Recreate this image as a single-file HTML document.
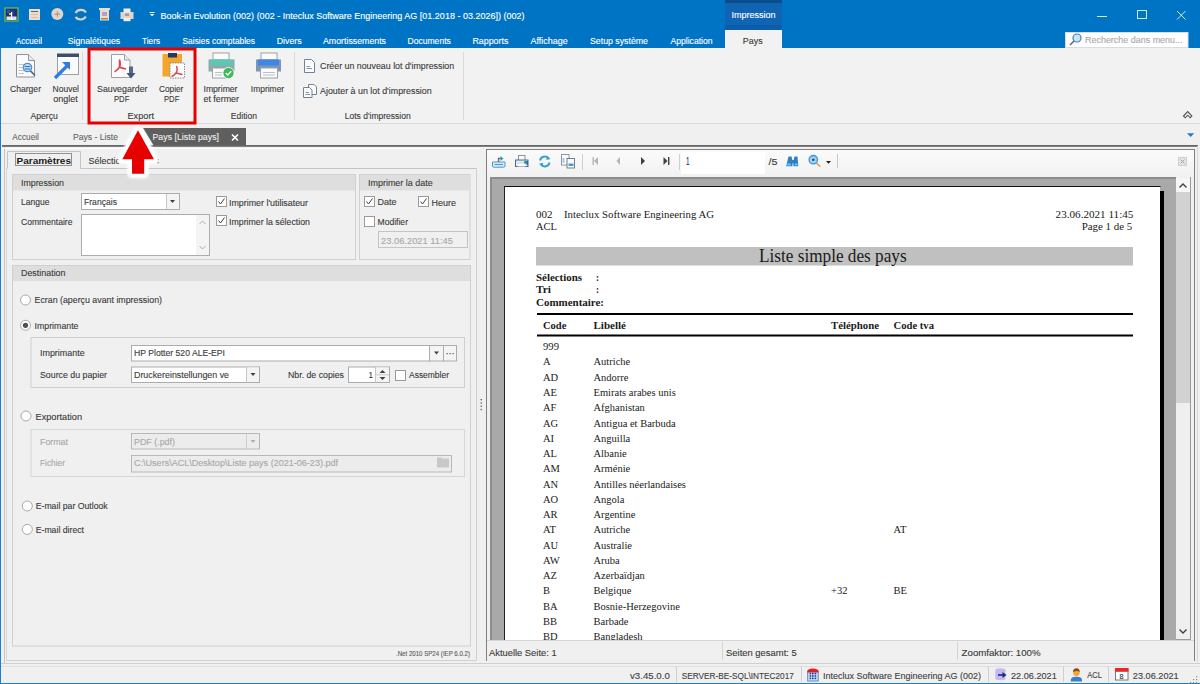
<!DOCTYPE html>
<html><head><meta charset="utf-8"><title>Book-in Evolution</title>
<style>
html,body{margin:0;padding:0;width:1200px;height:684px;overflow:hidden;background:#f0f0f0}
svg{display:block}
text{white-space:pre}
</style></head><body>
<svg width="1200" height="684" viewBox="0 0 1200 684">
<rect x="0" y="0" width="1200" height="684" fill="#f0f0f0"/>
<rect x="0" y="0" width="1200" height="48" fill="#0074c4" />
<rect x="5" y="8" width="13" height="13" fill="#1f2f7a" stroke="#6cc83c" stroke-width="1.2" />
<rect x="7" y="10" width="3" height="3" fill="#3050c0" />
<rect x="11" y="10" width="3" height="4" fill="#2040a0" />
<rect x="9" y="13" width="3" height="2" fill="#c0d040" />
<rect x="6.5" y="16.5" width="10" height="3.5" fill="#e0e4f0" />
<rect x="11" y="12" width="1.2" height="8" fill="#ffffff" />
<rect x="29" y="9" width="11" height="11" fill="#ecdccc" />
<line x1="31" y1="11.5" x2="38" y2="11.5" stroke="#606060" stroke-width="1" />
<line x1="31" y1="14.5" x2="38" y2="14.5" stroke="#d0c0b0" stroke-width="1" />
<line x1="31" y1="17.5" x2="38" y2="17.5" stroke="#d0c0b0" stroke-width="1" />
<circle cx="57.3" cy="14.1" r="6" fill="#e2d4c6"/>
<line x1="54.5" y1="14.1" x2="60" y2="14.1" stroke="#a09080" stroke-width="1" />
<line x1="57.3" y1="11.5" x2="57.3" y2="16.7" stroke="#a09080" stroke-width="1" />
<path d="M75.5 13 A6 5.6 0 0 1 86 12.5 M85.8 16.5 A6 5.6 0 0 1 75.5 17" stroke="#e2cebe" stroke-width="2.2" fill="none"/>
<rect x="99" y="8" width="11" height="2" fill="#ecdccc" />
<rect x="100" y="10" width="9" height="10.5" fill="#ecdccc" />
<rect x="102" y="12" width="5" height="4" fill="#b0a4c0" />
<rect x="101" y="18" width="7" height="1.5" fill="#c87850" />
<rect x="120.5" y="12" width="13" height="7" fill="#e2d4c6" />
<rect x="123.5" y="8.5" width="7" height="4" fill="#f4ece4" />
<rect x="123.5" y="18" width="7" height="3.2" fill="#f4ece4" />
<rect x="125" y="13.5" width="4" height="2.5" fill="#9a9ab0" />
<rect x="149.7" y="12" width="4.8" height="0.9" fill="#ffffff" />
<path d="M149.7 14 L154.5 14 L152.1 16.3 Z" fill="#ffffff" />
<text x="160.5" y="19.2" font-family="Liberation Sans" font-size="9.2" fill="#ffffff" textLength="364" lengthAdjust="spacingAndGlyphs" stroke="#ffffff" stroke-width="0.12" >Book-in Evolution (002) (002 - Inteclux Software Engineering AG [01.2018 - 03.2026]) (002)</text>
<rect x="725" y="0" width="57" height="30" fill="#1064b4" />
<rect x="725" y="0" width="57" height="3" fill="#0a4c8c" />
<rect x="725" y="25" width="57" height="5" fill="#0c5cac" />
<text x="731.5" y="18" font-family="Liberation Sans" font-size="9.2" fill="#ffffff" textLength="44" lengthAdjust="spacingAndGlyphs" stroke="#ffffff" stroke-width="0.12" >Impression</text>
<line x1="1097" y1="16.5" x2="1107" y2="16.5" stroke="#d6e6f4" stroke-width="1" />
<rect x="1137.5" y="10.5" width="9" height="8" fill="none" stroke="#d6e6f4" stroke-width="1" />
<path d="M1177 11 L1185.5 19.5 M1185.5 11 L1177 19.5" fill="none" stroke="#d6e6f4" stroke-width="1" />
<text x="15.8" y="43.7" font-family="Liberation Sans" font-size="9.2" fill="#ffffff" textLength="26.2" lengthAdjust="spacingAndGlyphs" stroke="#ffffff" stroke-width="0.12" >Accueil</text>
<text x="67.7" y="43.7" font-family="Liberation Sans" font-size="9.2" fill="#ffffff" textLength="52.5" lengthAdjust="spacingAndGlyphs" stroke="#ffffff" stroke-width="0.12" >Signalétiques</text>
<text x="142" y="43.7" font-family="Liberation Sans" font-size="9.2" fill="#ffffff" textLength="18" lengthAdjust="spacingAndGlyphs" stroke="#ffffff" stroke-width="0.12" >Tiers</text>
<text x="182.5" y="43.7" font-family="Liberation Sans" font-size="9.2" fill="#ffffff" textLength="72.5" lengthAdjust="spacingAndGlyphs" stroke="#ffffff" stroke-width="0.12" >Saisies comptables</text>
<text x="276.7" y="43.7" font-family="Liberation Sans" font-size="9.2" fill="#ffffff" textLength="25" lengthAdjust="spacingAndGlyphs" stroke="#ffffff" stroke-width="0.12" >Divers</text>
<text x="323" y="43.7" font-family="Liberation Sans" font-size="9.2" fill="#ffffff" textLength="63" lengthAdjust="spacingAndGlyphs" stroke="#ffffff" stroke-width="0.12" >Amortissements</text>
<text x="407.5" y="43.7" font-family="Liberation Sans" font-size="9.2" fill="#ffffff" textLength="43.3" lengthAdjust="spacingAndGlyphs" stroke="#ffffff" stroke-width="0.12" >Documents</text>
<text x="472.5" y="43.7" font-family="Liberation Sans" font-size="9.2" fill="#ffffff" textLength="35.8" lengthAdjust="spacingAndGlyphs" stroke="#ffffff" stroke-width="0.12" >Rapports</text>
<text x="530.5" y="43.7" font-family="Liberation Sans" font-size="9.2" fill="#ffffff" textLength="37.3" lengthAdjust="spacingAndGlyphs" stroke="#ffffff" stroke-width="0.12" >Affichage</text>
<text x="590" y="43.7" font-family="Liberation Sans" font-size="9.2" fill="#ffffff" textLength="58" lengthAdjust="spacingAndGlyphs" stroke="#ffffff" stroke-width="0.12" >Setup système</text>
<text x="670.5" y="43.7" font-family="Liberation Sans" font-size="9.2" fill="#ffffff" textLength="42" lengthAdjust="spacingAndGlyphs" stroke="#ffffff" stroke-width="0.12" >Application</text>
<rect x="725" y="30" width="57" height="18" fill="#f2f2f2" />
<text x="742.8" y="43.7" font-family="Liberation Sans" font-size="9.2" fill="#3a3a3a" textLength="19.8" lengthAdjust="spacingAndGlyphs" stroke="#3a3a3a" stroke-width="0.12" >Pays</text>
<rect x="1065.5" y="32.5" width="122.5" height="15" fill="#ffffff" stroke="#d8dde2" stroke-width="1" />
<circle cx="1077" cy="38" r="4" fill="#c8e6f8" stroke="#4a7fae" stroke-width="1.2"/>
<line x1="1074" y1="41" x2="1070" y2="45" stroke="#4a6f8e" stroke-width="1.6" />
<text x="1085" y="43" font-family="Liberation Sans" font-size="9.2" fill="#a8a8a8" textLength="97.5" lengthAdjust="spacingAndGlyphs" stroke="#a8a8a8" stroke-width="0.12" >Recherche dans menu...</text>
<rect x="0" y="48" width="1200" height="76" fill="#f2f2f2" />
<line x1="0" y1="123.5" x2="1200" y2="123.5" stroke="#d9d9d9" stroke-width="1" />
<line x1="82.5" y1="52" x2="82.5" y2="120" stroke="#dadada" stroke-width="1" />
<line x1="294.5" y1="52" x2="294.5" y2="120" stroke="#dadada" stroke-width="1" />
<line x1="463.5" y1="52" x2="463.5" y2="120" stroke="#dadada" stroke-width="1" />
<path d="M16.5 54.5 L28.5 54.5 L34.5 60.5 L34.5 77 L16.5 77 Z" fill="#fbfbfb" stroke="#8c949c" stroke-width="1" />
<path d="M28.5 54.5 L28.5 60.5 L34.5 60.5" fill="#e8e8e8" stroke="#8c949c" stroke-width="1" />
<line x1="18.5" y1="64.5" x2="24" y2="64.5" stroke="#c0c6cc" stroke-width="1" />
<line x1="18.5" y1="67.5" x2="24" y2="67.5" stroke="#c0c6cc" stroke-width="1" />
<line x1="18.5" y1="70.5" x2="24" y2="70.5" stroke="#c0c6cc" stroke-width="1" />
<line x1="18.5" y1="73.5" x2="24" y2="73.5" stroke="#c0c6cc" stroke-width="1" />
<circle cx="27.5" cy="67.5" r="4.2" fill="#bfe3f6" stroke="#5a8fb8" stroke-width="1.2"/>
<line x1="24.5" y1="66.5" x2="30.5" y2="66.5" stroke="#2d7fd0" stroke-width="1.2" />
<line x1="24.5" y1="69" x2="30.5" y2="69" stroke="#2d7fd0" stroke-width="1.2" />
<line x1="30.5" y1="70.8" x2="35" y2="75.5" stroke="#5a6b7c" stroke-width="1.8" />
<rect x="57.5" y="54.5" width="21" height="20" fill="#fbfbfb" stroke="#9aa2aa" stroke-width="1" />
<rect x="57" y="53.5" width="22" height="3.5" fill="#3b4f6a" />
<path d="M55 78 L67 66" fill="none" stroke="#2f7de0" stroke-width="3.2" />
<path d="M62 62 L70 62 L70 70 Z" fill="#2f7de0" />
<path d="M111.5 54.5 L124.5 54.5 L130 60 L130 77.5 L111.5 77.5 Z" fill="#fbfbfb" stroke="#9aa0a8" stroke-width="1" />
<path d="M124.5 54.5 L124.5 60 L130 60" fill="#ececec" stroke="#9aa0a8" stroke-width="1" />
<path d="M119.5 59.5 C120.5 63 121 65 119.5 67 C118 69.5 116 71 114.5 72 M119.5 67 C121.5 68 124 68.5 126 69 M119.5 67 L119.5 59.5" fill="none" stroke="#d8434e" stroke-width="1.5" />
<rect x="129" y="66.5" width="4" height="7" fill="#4f6a8c" />
<path d="M126.5 73 L135.5 73 L131 78.5 Z" fill="#3f5878" />
<rect x="162.5" y="54" width="19.5" height="22.5" fill="#f4a62a" />
<rect x="168" y="53" width="9" height="4.5" fill="#203a66" />
<rect x="170" y="63" width="14.5" height="15" fill="#fdfdfd" stroke="#8a9098" stroke-width="1" stroke-dasharray="1.5 1"/>
<path d="M176.5 66 C177.5 69 177.5 71 176 73 C174.5 75 173 76 171.5 76.5 M176 73 C178 73.5 180.5 74 182.5 74.5" fill="none" stroke="#d8434e" stroke-width="1.4" />
<rect x="213" y="53" width="16" height="7" fill="#fbfbfb" stroke="#9aa2a8" stroke-width="1" />
<rect x="208.5" y="59.5" width="26" height="12" fill="#8faaa6" />
<rect x="210" y="59.5" width="23" height="6" fill="#5fc6b4" />
<rect x="212.5" y="68" width="17" height="10" fill="#fbfbfb" stroke="#9aa2a8" stroke-width="1" />
<line x1="215" y1="72.5" x2="226" y2="72.5" stroke="#b8c0c0" stroke-width="1" />
<line x1="215" y1="75" x2="222" y2="75" stroke="#b8c0c0" stroke-width="1" />
<circle cx="228.5" cy="73" r="5.6" fill="#3dba5d" stroke="#ffffff" stroke-width="0.8"/>
<path d="M225.8 73 L227.8 75 L231.2 71.2" fill="none" stroke="#ffffff" stroke-width="1.4" />
<rect x="261" y="53" width="16" height="7" fill="#fbfbfb" stroke="#9aa2a8" stroke-width="1" />
<rect x="256" y="59.5" width="25" height="12" fill="#7d96b8" />
<rect x="258" y="59.5" width="21" height="6" fill="#3f86e6" />
<rect x="260.5" y="68" width="17" height="10" fill="#fbfbfb" stroke="#9aa2a8" stroke-width="1" />
<line x1="263" y1="72.5" x2="275" y2="72.5" stroke="#b8c0c8" stroke-width="1" />
<line x1="263" y1="75" x2="275" y2="75" stroke="#b8c0c8" stroke-width="1" />
<path d="M304.5 59.5 L311.5 59.5 L314.5 62.5 L314.5 72.5 L304.5 72.5 Z" fill="#fbfbfb" stroke="#6f8396" stroke-width="1" />
<line x1="306.5" y1="66.5" x2="310" y2="66.5" stroke="#8796a6" stroke-width="1" />
<line x1="306.5" y1="68.5" x2="312" y2="68.5" stroke="#8796a6" stroke-width="1" />
<path d="M308.5 84.5 L314 84.5 L316.5 87 L316.5 94.5 L308.5 94.5 Z" fill="#fbfbfb" stroke="#6f8396" stroke-width="1" />
<path d="M303.5 87.5 L309.5 87.5 L312 90 L312 97.5 L303.5 97.5 Z" fill="#fbfbfb" stroke="#6f8396" stroke-width="1" />
<line x1="305.5" y1="92.5" x2="309" y2="92.5" stroke="#8796a6" stroke-width="1" />
<line x1="305.5" y1="94.5" x2="310" y2="94.5" stroke="#8796a6" stroke-width="1" />
<rect x="89" y="49" width="106" height="74" fill="none" stroke="#e60000" stroke-width="3" />
<text x="10" y="91.7" font-family="Liberation Sans" font-size="9.2" fill="#3a3a3a" textLength="31" lengthAdjust="spacingAndGlyphs" stroke="#3a3a3a" stroke-width="0.12" >Charger</text>
<text x="52.6" y="91.7" font-family="Liberation Sans" font-size="9.2" fill="#3a3a3a" textLength="26.4" lengthAdjust="spacingAndGlyphs" stroke="#3a3a3a" stroke-width="0.12" >Nouvel</text>
<text x="53.2" y="102" font-family="Liberation Sans" font-size="9.2" fill="#3a3a3a" textLength="24.6" lengthAdjust="spacingAndGlyphs" stroke="#3a3a3a" stroke-width="0.12" >onglet</text>
<text x="30.4" y="119.3" font-family="Liberation Sans" font-size="9.2" fill="#3a3a3a" textLength="27.5" lengthAdjust="spacingAndGlyphs" stroke="#3a3a3a" stroke-width="0.12" >Aperçu</text>
<text x="97" y="92.3" font-family="Liberation Sans" font-size="9.2" fill="#3a3a3a" textLength="50.5" lengthAdjust="spacingAndGlyphs" stroke="#3a3a3a" stroke-width="0.12" >Sauvegarder</text>
<text x="114" y="102.3" font-family="Liberation Sans" font-size="9.2" fill="#3a3a3a" textLength="15.3" lengthAdjust="spacingAndGlyphs" stroke="#3a3a3a" stroke-width="0.12" >PDF</text>
<text x="159" y="92.3" font-family="Liberation Sans" font-size="9.2" fill="#3a3a3a" textLength="24.3" lengthAdjust="spacingAndGlyphs" stroke="#3a3a3a" stroke-width="0.12" >Copier</text>
<text x="164" y="102.3" font-family="Liberation Sans" font-size="9.2" fill="#3a3a3a" textLength="15.3" lengthAdjust="spacingAndGlyphs" stroke="#3a3a3a" stroke-width="0.12" >PDF</text>
<text x="127.5" y="119.3" font-family="Liberation Sans" font-size="9.2" fill="#3a3a3a" textLength="26.5" lengthAdjust="spacingAndGlyphs" stroke="#3a3a3a" stroke-width="0.12" >Export</text>
<text x="203.5" y="91.7" font-family="Liberation Sans" font-size="9.2" fill="#3a3a3a" textLength="34" lengthAdjust="spacingAndGlyphs" stroke="#3a3a3a" stroke-width="0.12" >Imprimer</text>
<text x="203.5" y="102" font-family="Liberation Sans" font-size="9.2" fill="#3a3a3a" textLength="35.5" lengthAdjust="spacingAndGlyphs" stroke="#3a3a3a" stroke-width="0.12" >et fermer</text>
<text x="250.8" y="91.7" font-family="Liberation Sans" font-size="9.2" fill="#3a3a3a" textLength="33.4" lengthAdjust="spacingAndGlyphs" stroke="#3a3a3a" stroke-width="0.12" >Imprimer</text>
<text x="230.8" y="119.3" font-family="Liberation Sans" font-size="9.2" fill="#3a3a3a" textLength="26.1" lengthAdjust="spacingAndGlyphs" stroke="#3a3a3a" stroke-width="0.12" >Edition</text>
<text x="320" y="69" font-family="Liberation Sans" font-size="9.2" fill="#3a3a3a" textLength="134.2" lengthAdjust="spacingAndGlyphs" stroke="#3a3a3a" stroke-width="0.12" >Créer un nouveau lot d&#x27;impression</text>
<text x="320" y="93.7" font-family="Liberation Sans" font-size="9.2" fill="#3a3a3a" textLength="111.7" lengthAdjust="spacingAndGlyphs" stroke="#3a3a3a" stroke-width="0.12" >Ajouter à un lot d&#x27;impression</text>
<text x="344.7" y="119.3" font-family="Liberation Sans" font-size="9.2" fill="#3a3a3a" textLength="66" lengthAdjust="spacingAndGlyphs" stroke="#3a3a3a" stroke-width="0.12" >Lots d&#x27;impression</text>
<path d="M1183.5 116 L1187.7 111.5 L1191.9 116 L1190.2 117.8 L1187.7 115.2 L1185.2 117.8 Z" fill="none" stroke="#555555" stroke-width="1.1" />
<text x="12.3" y="139.5" font-family="Liberation Sans" font-size="9.2" fill="#666666" textLength="26.6" lengthAdjust="spacingAndGlyphs" stroke="#666666" stroke-width="0.12" >Accueil</text>
<text x="73" y="140" font-family="Liberation Sans" font-size="9.2" fill="#666666" textLength="45" lengthAdjust="spacingAndGlyphs" stroke="#666666" stroke-width="0.12" >Pays - Liste</text>
<path d="M143 128 L246 128 L246 146 L154 146 Z" fill="#5f5f5f" />
<text x="152.5" y="140.3" font-family="Liberation Sans" font-size="9.2" fill="#eeeeee" textLength="66.5" lengthAdjust="spacingAndGlyphs" stroke="#eeeeee" stroke-width="0.12" >Pays [Liste pays]</text>
<path d="M232 134.5 L238 140.5 M238 134.5 L232 140.5" fill="none" stroke="#ffffff" stroke-width="1.6" />
<rect x="2" y="145" width="1196" height="1.8" fill="#666666" />
<path d="M1187 133.2 L1194.2 133.2 L1190.6 137 Z" fill="#1a7fd0" />
<line x1="4.5" y1="147" x2="4.5" y2="663.5" stroke="#c4c4c4" stroke-width="1" />
<line x1="6.5" y1="168" x2="6.5" y2="660.5" stroke="#d8d8d8" stroke-width="1" />
<line x1="2" y1="148.5" x2="480" y2="148.5" stroke="#ffffff" stroke-width="1" />
<path d="M7.5 168.5 L7.5 151.5 L80.5 151.5 L80.5 168.5" fill="#f0f0f0" stroke="#c4c4c4" stroke-width="1" />
<line x1="80.5" y1="168.5" x2="476" y2="168.5" stroke="#c4c4c4" stroke-width="1" />
<rect x="15.5" y="153.5" width="56" height="12" fill="none" stroke="#333333" stroke-width="1" stroke-dasharray="1 1"/>
<text x="16.5" y="163.5" font-family="Liberation Sans" font-size="9.4" fill="#1a1a1a" font-weight="bold" textLength="54.5" lengthAdjust="spacingAndGlyphs" >Paramètres</text>
<clipPath id="selc"><rect x="80" y="150" width="39" height="20"/></clipPath>
<text x="88.5" y="163.5" font-family="Liberation Sans" font-size="9.2" fill="#3a3a3a" textLength="37" lengthAdjust="spacingAndGlyphs" stroke="#3a3a3a" stroke-width="0.12" clip-path="url(#selc)">Sélection</text>
<rect x="157.5" y="159" width="1.2" height="1.2" fill="#606060" />
<rect x="157.5" y="162" width="1.2" height="1.2" fill="#606060" />
<line x1="476.5" y1="168" x2="476.5" y2="660" stroke="#d0d0d0" stroke-width="1" />
<line x1="6.5" y1="660.5" x2="476.5" y2="660.5" stroke="#d0d0d0" stroke-width="1" />
<rect x="12.5" y="174.5" width="343" height="85" fill="#f0f0f0" stroke="#d0d0d0" stroke-width="1" />
<rect x="13" y="175" width="342" height="15.5" fill="#dedede" />
<text x="21" y="185.6" font-family="Liberation Sans" font-size="9.2" fill="#3a3a3a" textLength="43" lengthAdjust="spacingAndGlyphs" stroke="#3a3a3a" stroke-width="0.12" >Impression</text>
<text x="21" y="205" font-family="Liberation Sans" font-size="9.2" fill="#3a3a3a" textLength="28.5" lengthAdjust="spacingAndGlyphs" stroke="#3a3a3a" stroke-width="0.12" >Langue</text>
<rect x="81.5" y="193.5" width="98" height="16" fill="#ffffff" stroke="#acacac" stroke-width="1" />
<rect x="166" y="194" width="13" height="15" fill="#f4f4f4" />
<line x1="166.5" y1="194" x2="166.5" y2="209" stroke="#c8c8c8" stroke-width="1" />
<path d="M170 200 L175 200 L172.5 203 Z" fill="#404040" />
<text x="84" y="205" font-family="Liberation Sans" font-size="9.2" fill="#3a3a3a" textLength="33" lengthAdjust="spacingAndGlyphs" stroke="#3a3a3a" stroke-width="0.12" >Français</text>
<text x="21" y="225" font-family="Liberation Sans" font-size="9.2" fill="#3a3a3a" textLength="51.5" lengthAdjust="spacingAndGlyphs" stroke="#3a3a3a" stroke-width="0.12" >Commentaire</text>
<rect x="81.5" y="214.5" width="128" height="41" fill="#ffffff" stroke="#acacac" stroke-width="1" />
<rect x="196" y="215" width="13" height="40" fill="#f4f4f4" />
<path d="M199.5 224 L202.5 221 L205.5 224" fill="none" stroke="#b0b0b0" stroke-width="1" />
<path d="M199.5 246 L202.5 249 L205.5 246" fill="none" stroke="#b0b0b0" stroke-width="1" />
<rect x="216.5" y="196.5" width="10" height="10" fill="#ffffff" stroke="#9a9a9a" stroke-width="1" />
<path d="M218.5 201.5 L220.5 204 L224.5 198.5" fill="none" stroke="#404040" stroke-width="1" />
<text x="229" y="205.6" font-family="Liberation Sans" font-size="9.2" fill="#3a3a3a" textLength="79" lengthAdjust="spacingAndGlyphs" stroke="#3a3a3a" stroke-width="0.12" >Imprimer l&#x27;utilisateur</text>
<rect x="216.5" y="215.5" width="10" height="10" fill="#ffffff" stroke="#9a9a9a" stroke-width="1" />
<path d="M218.5 220.5 L220.5 223 L224.5 217.5" fill="none" stroke="#404040" stroke-width="1" />
<text x="229" y="224.5" font-family="Liberation Sans" font-size="9.2" fill="#3a3a3a" textLength="81" lengthAdjust="spacingAndGlyphs" stroke="#3a3a3a" stroke-width="0.12" >Imprimer la sélection</text>
<rect x="359.5" y="174.5" width="110.5" height="85" fill="#f0f0f0" stroke="#d0d0d0" stroke-width="1" />
<rect x="360" y="175" width="109.5" height="15.5" fill="#dedede" />
<text x="368" y="185.8" font-family="Liberation Sans" font-size="9.2" fill="#3a3a3a" textLength="64.7" lengthAdjust="spacingAndGlyphs" stroke="#3a3a3a" stroke-width="0.12" >Imprimer la date</text>
<rect x="364.5" y="196.5" width="10" height="10" fill="#ffffff" stroke="#9a9a9a" stroke-width="1" />
<path d="M366.5 201.5 L368.5 204 L372.5 198.5" fill="none" stroke="#404040" stroke-width="1" />
<text x="377.5" y="205" font-family="Liberation Sans" font-size="9.2" fill="#3a3a3a" textLength="19" lengthAdjust="spacingAndGlyphs" stroke="#3a3a3a" stroke-width="0.12" >Date</text>
<rect x="418.5" y="196.5" width="10" height="10" fill="#ffffff" stroke="#9a9a9a" stroke-width="1" />
<path d="M420.5 201.5 L422.5 204 L426.5 198.5" fill="none" stroke="#404040" stroke-width="1" />
<text x="431.5" y="205.5" font-family="Liberation Sans" font-size="9.2" fill="#3a3a3a" textLength="24.5" lengthAdjust="spacingAndGlyphs" stroke="#3a3a3a" stroke-width="0.12" >Heure</text>
<rect x="364.5" y="216.5" width="10" height="10" fill="#ffffff" stroke="#9a9a9a" stroke-width="1" />
<text x="377.5" y="225.4" font-family="Liberation Sans" font-size="9.2" fill="#3a3a3a" textLength="30.5" lengthAdjust="spacingAndGlyphs" stroke="#3a3a3a" stroke-width="0.12" >Modifier</text>
<rect x="378.5" y="231.5" width="89" height="16" fill="#f0f0f0" stroke="#c4c4c4" stroke-width="1" />
<text x="381" y="244" font-family="Liberation Sans" font-size="9.2" fill="#a8a8a8" textLength="72" lengthAdjust="spacingAndGlyphs" stroke="#a8a8a8" stroke-width="0.12" >23.06.2021 11:45</text>
<rect x="12.5" y="265.5" width="458" height="380.5" fill="#f0f0f0" stroke="#d0d0d0" stroke-width="1" />
<rect x="13" y="266" width="457" height="15" fill="#dedede" />
<text x="21" y="276" font-family="Liberation Sans" font-size="9.2" fill="#3a3a3a" textLength="44.5" lengthAdjust="spacingAndGlyphs" stroke="#3a3a3a" stroke-width="0.12" >Destination</text>
<circle cx="25.5" cy="300" r="5" fill="#ffffff" stroke="#a8a8a8" stroke-width="1"/>
<text x="34.5" y="303.3" font-family="Liberation Sans" font-size="9.2" fill="#3a3a3a" textLength="127.5" lengthAdjust="spacingAndGlyphs" stroke="#3a3a3a" stroke-width="0.12" >Ecran (aperçu avant impression)</text>
<circle cx="25.5" cy="325.3" r="5" fill="#ffffff" stroke="#a8a8a8" stroke-width="1"/>
<circle cx="25.5" cy="325.3" r="2.6" fill="#505050"/>
<text x="34.5" y="328.7" font-family="Liberation Sans" font-size="9.2" fill="#3a3a3a" textLength="44" lengthAdjust="spacingAndGlyphs" stroke="#3a3a3a" stroke-width="0.12" >Imprimante</text>
<rect x="31" y="337.5" width="433.5" height="50" fill="none" stroke="#cfcfcf" stroke-width="1" />
<text x="40" y="356" font-family="Liberation Sans" font-size="9.2" fill="#3a3a3a" textLength="44.6" lengthAdjust="spacingAndGlyphs" stroke="#3a3a3a" stroke-width="0.12" >Imprimante</text>
<rect x="131.5" y="345.5" width="298" height="15.5" fill="#ffffff" stroke="#acacac" stroke-width="1" />
<rect x="429.5" y="345.5" width="14" height="15.5" fill="#f4f4f4" stroke="#acacac" stroke-width="1" />
<path d="M434 351.5 L439 351.5 L436.5 354.5 Z" fill="#404040" />
<rect x="443.5" y="345.5" width="13" height="15.5" fill="#f4f4f4" stroke="#acacac" stroke-width="1" />
<rect x="446.5" y="353" width="1.2" height="1.2" fill="#505050" />
<rect x="449.5" y="353" width="1.2" height="1.2" fill="#505050" />
<rect x="452.5" y="353" width="1.2" height="1.2" fill="#505050" />
<text x="134" y="356" font-family="Liberation Sans" font-size="9.2" fill="#3a3a3a" textLength="91" lengthAdjust="spacingAndGlyphs" stroke="#3a3a3a" stroke-width="0.12" >HP Plotter 520 ALE-EPI</text>
<text x="40" y="377.7" font-family="Liberation Sans" font-size="9.2" fill="#3a3a3a" textLength="67" lengthAdjust="spacingAndGlyphs" stroke="#3a3a3a" stroke-width="0.12" >Source du papier</text>
<rect x="131.5" y="367" width="128" height="15.5" fill="#ffffff" stroke="#acacac" stroke-width="1" />
<rect x="246.5" y="367.5" width="12.5" height="14.5" fill="#f4f4f4" />
<line x1="246.5" y1="367" x2="246.5" y2="382.5" stroke="#c8c8c8" stroke-width="1" />
<path d="M250.5 373 L255.5 373 L253 376 Z" fill="#404040" />
<text x="134" y="378" font-family="Liberation Sans" font-size="9.2" fill="#3a3a3a" textLength="95" lengthAdjust="spacingAndGlyphs" stroke="#3a3a3a" stroke-width="0.12" >Druckereinstellungen ve</text>
<text x="288" y="378" font-family="Liberation Sans" font-size="9.2" fill="#3a3a3a" textLength="56" lengthAdjust="spacingAndGlyphs" stroke="#3a3a3a" stroke-width="0.12" >Nbr. de copies</text>
<rect x="348.5" y="367" width="41" height="15.5" fill="#ffffff" stroke="#acacac" stroke-width="1" />
<rect x="376" y="367.5" width="13" height="14.5" fill="#f4f4f4" />
<line x1="375.5" y1="367" x2="375.5" y2="382.5" stroke="#c8c8c8" stroke-width="1" />
<line x1="376" y1="374.8" x2="389" y2="374.8" stroke="#c8c8c8" stroke-width="1" />
<path d="M379.5 373 L382.5 370 L385.5 373 Z" fill="#404040" />
<path d="M379.5 377 L385.5 377 L382.5 380 Z" fill="#404040" />
<text x="368.5" y="378" font-family="Liberation Sans" font-size="9.2" fill="#3a3a3a" textLength="4.5" lengthAdjust="spacingAndGlyphs" stroke="#3a3a3a" stroke-width="0.12" >1</text>
<rect x="395.5" y="370.5" width="10" height="10" fill="#ffffff" stroke="#9a9a9a" stroke-width="1" />
<text x="409" y="378.3" font-family="Liberation Sans" font-size="9.2" fill="#3a3a3a" textLength="40" lengthAdjust="spacingAndGlyphs" stroke="#3a3a3a" stroke-width="0.12" >Assembler</text>
<circle cx="26" cy="416" r="5" fill="#ffffff" stroke="#a8a8a8" stroke-width="1"/>
<text x="35.5" y="420" font-family="Liberation Sans" font-size="9.2" fill="#3a3a3a" textLength="46.5" lengthAdjust="spacingAndGlyphs" stroke="#3a3a3a" stroke-width="0.12" >Exportation</text>
<rect x="31" y="429.5" width="433.5" height="47" fill="none" stroke="#d6d6d6" stroke-width="1" />
<text x="40" y="444.5" font-family="Liberation Sans" font-size="9.2" fill="#a8a8a8" textLength="28" lengthAdjust="spacingAndGlyphs" stroke="#a8a8a8" stroke-width="0.12" >Format</text>
<rect x="131.5" y="433.5" width="128" height="15.5" fill="#ececec" stroke="#b8b8b8" stroke-width="1" />
<line x1="246.5" y1="434" x2="246.5" y2="449" stroke="#d0d0d0" stroke-width="1" />
<path d="M250.5 440 L255.5 440 L253 443 Z" fill="#b0b0b0" />
<text x="134" y="445" font-family="Liberation Sans" font-size="9.2" fill="#a8a8a8" textLength="41" lengthAdjust="spacingAndGlyphs" stroke="#a8a8a8" stroke-width="0.12" >PDF (.pdf)</text>
<text x="40" y="465.6" font-family="Liberation Sans" font-size="9.2" fill="#a8a8a8" textLength="25" lengthAdjust="spacingAndGlyphs" stroke="#a8a8a8" stroke-width="0.12" >Fichier</text>
<rect x="131.5" y="455.5" width="320" height="16.5" fill="#ececec" stroke="#b8b8b8" stroke-width="1" />
<text x="134" y="466" font-family="Liberation Sans" font-size="9.2" fill="#a8a8a8" textLength="204" lengthAdjust="spacingAndGlyphs" stroke="#a8a8a8" stroke-width="0.12" >C:\Users\ACL\Desktop\Liste pays (2021-06-23).pdf</text>
<rect x="437" y="458.5" width="12" height="9" fill="#c8c8c8" />
<rect x="437" y="457.5" width="5" height="2" fill="#c8c8c8" />
<circle cx="27.3" cy="506" r="5" fill="#ffffff" stroke="#a8a8a8" stroke-width="1"/>
<text x="35.7" y="509.3" font-family="Liberation Sans" font-size="9.2" fill="#3a3a3a" textLength="72" lengthAdjust="spacingAndGlyphs" stroke="#3a3a3a" stroke-width="0.12" >E-mail par Outlook</text>
<circle cx="27.3" cy="529.4" r="5" fill="#ffffff" stroke="#a8a8a8" stroke-width="1"/>
<text x="35.7" y="532.7" font-family="Liberation Sans" font-size="9.2" fill="#3a3a3a" textLength="48.3" lengthAdjust="spacingAndGlyphs" stroke="#3a3a3a" stroke-width="0.12" >E-mail direct</text>
<text x="396" y="655.8" font-family="Liberation Sans" font-size="8" fill="#5a5a5a" textLength="74" lengthAdjust="spacingAndGlyphs" stroke="#5a5a5a" stroke-width="0.12" >.Net 2010 SP24 (IEP 6.0.2)</text>
<rect x="480.6" y="399" width="1.3" height="1.3" fill="#555555" />
<rect x="480.6" y="402.3" width="1.3" height="1.3" fill="#555555" />
<rect x="480.6" y="405.6" width="1.3" height="1.3" fill="#555555" />
<rect x="480.6" y="408.9" width="1.3" height="1.3" fill="#555555" />
<rect x="486.5" y="149.5" width="708" height="511" fill="#f0f0f0" stroke="#808080" stroke-width="1" />
<line x1="1197.5" y1="146" x2="1197.5" y2="662" stroke="#d8d8d8" stroke-width="1" />
<defs><linearGradient id="tb" x1="0" y1="0" x2="0" y2="1"><stop offset="0" stop-color="#fbfbfb"/><stop offset="1" stop-color="#f1f1f1"/></linearGradient></defs>
<rect x="487" y="150" width="707" height="27" fill="url(#tb)" />
<path d="M492.5 162 L505 162 L505 166 Q505 167.2 503.8 167.2 L493.7 167.2 Q492.5 167.2 492.5 166 Z" fill="#d8ecf8" stroke="#4a98c8" stroke-width="1" />
<line x1="494.5" y1="164.5" x2="503" y2="164.5" stroke="#4a98c8" stroke-width="1" />
<path d="M498.5 162 L498.5 158.5 L501 158.5" fill="none" stroke="#507090" stroke-width="1.3" />
<path d="M500.5 156 L503.5 158.5 L500.5 161 Z" fill="#3a9a9a" />
<rect x="518.5" y="155.5" width="6.5" height="5" fill="#fbfbfb" stroke="#7a8a9a" stroke-width="0.9" />
<rect x="515.5" y="160" width="12.5" height="6.5" fill="#d4e8f8" stroke="#506a8a" stroke-width="1" />
<rect x="517.5" y="164" width="8" height="2.5" fill="#fbfbfb" />
<circle cx="525.5" cy="162.3" r="1.5" fill="#2a9a4a"/>
<rect x="526.5" y="161" width="1.5" height="4" fill="#3060d0" />
<path d="M540 160.5 A4.8 4.8 0 0 1 548.5 158.5 M549.5 162.5 A4.8 4.8 0 0 1 541 164.5" fill="none" stroke="#3aa0d0" stroke-width="2" />
<path d="M547 155.8 L550.5 159 L546.3 160 Z" fill="#3aa0d0" />
<path d="M542.5 167 L539 163.8 L543.2 162.8 Z" fill="#3aa0d0" />
<rect x="561.5" y="154.5" width="7.5" height="10.5" fill="#fbfbfb" stroke="#8090a0" stroke-width="0.9" />
<rect x="562.5" y="158" width="2" height="5" fill="#a8c8e8" />
<rect x="567" y="158.5" width="7.5" height="9.5" fill="#fbfbfb" stroke="#607080" stroke-width="0.9" />
<rect x="568.5" y="163.5" width="5" height="2.5" fill="#4a98e0" />
<line x1="582.5" y1="154" x2="582.5" y2="170" stroke="#cfcfcf" stroke-width="1" />
<rect x="592.5" y="157" width="1.4" height="8" fill="#b4b4b4" />
<path d="M598 157 L594 161 L598 165 Z" fill="#b4b4b4" />
<path d="M620 157 L616.5 161 L620 165 Z" fill="#b4b4b4" />
<path d="M641 157 L645 161 L641 165 Z" fill="#404040" />
<path d="M663.5 157 L667.5 161 L663.5 165 Z" fill="#404040" />
<rect x="668" y="157" width="1.4" height="8" fill="#404040" />
<line x1="679.5" y1="154" x2="679.5" y2="170" stroke="#cfcfcf" stroke-width="1" />
<rect x="681" y="152" width="84" height="22" fill="#ffffff" />
<text x="686" y="165" font-family="Liberation Sans" font-size="10" fill="#303050" textLength="3.5" lengthAdjust="spacingAndGlyphs" stroke="#303050" stroke-width="0.12" >1</text>
<text x="768.6" y="165" font-family="Liberation Sans" font-size="9.2" fill="#3a3a3a" textLength="9" lengthAdjust="spacingAndGlyphs" stroke="#3a3a3a" stroke-width="0.12" >/5</text>
<path d="M788.5 156.5 L791.5 156.5 L792.3 160 L793.7 160 L794.5 156.5 L797.5 156.5 L798.3 166.3 L793.6 166.3 L793.3 163 L792.7 163 L792.4 166.3 L786.2 166.3 Z" fill="#2f7fc4" />
<rect x="787.3" y="163.5" width="3.5" height="2" fill="#7cc0ee" />
<rect x="795" y="163.5" width="2.5" height="2" fill="#7cc0ee" />
<circle cx="813.3" cy="159.7" r="4.2" fill="#9fd4f4" stroke="#3d94d6" stroke-width="1.3"/>
<circle cx="813.3" cy="159.7" r="1.3" fill="#1f4f80"/>
<line x1="816.3" y1="162.8" x2="820.3" y2="166.5" stroke="#e0a060" stroke-width="1.7" />
<path d="M826 161 L831 161 L828.5 163.8 Z" fill="#202020" />
<line x1="837.5" y1="154" x2="837.5" y2="168" stroke="#c8c8c8" stroke-width="1" />
<rect x="1178.5" y="157.5" width="8" height="8" fill="#e4e4e4" stroke="#d0d0d0" stroke-width="1" />
<path d="M1180.5 159.5 L1184.5 163.5 M1184.5 159.5 L1180.5 163.5" fill="none" stroke="#a0a0a0" stroke-width="0.9" />
<rect x="490" y="177" width="686" height="463" fill="#a9a9a9" />
<rect x="490" y="177" width="686" height="2" fill="#8c8c8c" />
<rect x="490" y="177" width="2" height="463" fill="#8c8c8c" />
<rect x="504" y="186.5" width="656" height="453.5" fill="#ffffff" />
<line x1="504" y1="186.5" x2="1160.5" y2="186.5" stroke="#111111" stroke-width="1" />
<line x1="504.5" y1="186.5" x2="504.5" y2="640" stroke="#222222" stroke-width="1" />
<rect x="1160" y="191" width="4" height="449" fill="#000000" />
<rect x="1176" y="177" width="14.5" height="463" fill="#efefef" />
<rect x="1176" y="178" width="14" height="14" fill="#f6f6f6" />
<rect x="1176" y="192" width="14" height="211" fill="#d2d2d2" />
<line x1="1190.5" y1="177" x2="1190.5" y2="640" stroke="#9a9a9a" stroke-width="1" />
<line x1="1176" y1="639.5" x2="1191" y2="639.5" stroke="#9a9a9a" stroke-width="1" />
<path d="M1179.5 187.5 L1183 184 L1186.5 187.5" fill="none" stroke="#404040" stroke-width="1.4" />
<path d="M1179.5 629.5 L1183 633 L1186.5 629.5" fill="none" stroke="#404040" stroke-width="1.4" />
<text x="536" y="217.5" font-family="Liberation Serif" font-size="10.5" fill="#1a1a1a" textLength="16.6" lengthAdjust="spacingAndGlyphs" >002</text>
<text x="564" y="217.5" font-family="Liberation Serif" font-size="10.5" fill="#1a1a1a" textLength="150" lengthAdjust="spacingAndGlyphs" >Inteclux Software Engineering AG</text>
<text x="536" y="230" font-family="Liberation Serif" font-size="10.5" fill="#1a1a1a" textLength="21" lengthAdjust="spacingAndGlyphs" >ACL</text>
<text x="1055.6" y="217.5" font-family="Liberation Serif" font-size="10.5" fill="#1a1a1a" textLength="77.8" lengthAdjust="spacingAndGlyphs" >23.06.2021 11:45</text>
<text x="1081.7" y="230" font-family="Liberation Serif" font-size="10.5" fill="#1a1a1a" textLength="50.5" lengthAdjust="spacingAndGlyphs" >Page 1 de 5</text>
<rect x="536" y="247" width="597" height="18.5" fill="#c0c0c0" />
<text x="759" y="261.6" font-family="Liberation Serif" font-size="18" fill="#1a1a1a" textLength="147.6" lengthAdjust="spacingAndGlyphs" >Liste simple des pays</text>
<text x="536" y="280.5" font-family="Liberation Serif" font-size="10.5" fill="#1a1a1a" font-weight="bold" textLength="46" lengthAdjust="spacingAndGlyphs" >Sélections</text>
<text x="596" y="280.5" font-family="Liberation Serif" font-size="10.5" fill="#1a1a1a" font-weight="bold" textLength="3" lengthAdjust="spacingAndGlyphs" >:</text>
<text x="536" y="292.5" font-family="Liberation Serif" font-size="10.5" fill="#1a1a1a" font-weight="bold" textLength="15" lengthAdjust="spacingAndGlyphs" >Tri</text>
<text x="596" y="292.5" font-family="Liberation Serif" font-size="10.5" fill="#1a1a1a" font-weight="bold" textLength="3" lengthAdjust="spacingAndGlyphs" >:</text>
<text x="536" y="306" font-family="Liberation Serif" font-size="10.5" fill="#1a1a1a" font-weight="bold" textLength="68" lengthAdjust="spacingAndGlyphs" >Commentaire:</text>
<rect x="537" y="313" width="596" height="2" fill="#000000" />
<text x="543" y="328.5" font-family="Liberation Serif" font-size="10.5" fill="#1a1a1a" font-weight="bold" textLength="23.4" lengthAdjust="spacingAndGlyphs" >Code</text>
<text x="593.5" y="328.5" font-family="Liberation Serif" font-size="10.5" fill="#1a1a1a" font-weight="bold" textLength="32.5" lengthAdjust="spacingAndGlyphs" >Libellé</text>
<text x="831" y="328.5" font-family="Liberation Serif" font-size="10.5" fill="#1a1a1a" font-weight="bold" textLength="48" lengthAdjust="spacingAndGlyphs" >Téléphone</text>
<text x="893.5" y="328.5" font-family="Liberation Serif" font-size="10.5" fill="#1a1a1a" font-weight="bold" textLength="40.5" lengthAdjust="spacingAndGlyphs" >Code tva</text>
<rect x="537" y="334.5" width="596" height="2" fill="#000000" />
<text x="543" y="349.5" font-family="Liberation Serif" font-size="10.5" fill="#1a1a1a" textLength="16" lengthAdjust="spacingAndGlyphs" >999</text>
<clipPath id="pg"><rect x="505" y="187" width="655" height="453"/></clipPath><g clip-path="url(#pg)">
<text x="543" y="365.4" font-family="Liberation Serif" font-size="10.5" fill="#1a1a1a" >A</text>
<text x="593.5" y="365.4" font-family="Liberation Serif" font-size="10.5" fill="#1a1a1a" >Autriche</text>
<text x="543" y="380.7" font-family="Liberation Serif" font-size="10.5" fill="#1a1a1a" >AD</text>
<text x="593.5" y="380.7" font-family="Liberation Serif" font-size="10.5" fill="#1a1a1a" >Andorre</text>
<text x="543" y="395.9" font-family="Liberation Serif" font-size="10.5" fill="#1a1a1a" >AE</text>
<text x="593.5" y="395.9" font-family="Liberation Serif" font-size="10.5" fill="#1a1a1a" >Emirats arabes unis</text>
<text x="543" y="411.2" font-family="Liberation Serif" font-size="10.5" fill="#1a1a1a" >AF</text>
<text x="593.5" y="411.2" font-family="Liberation Serif" font-size="10.5" fill="#1a1a1a" >Afghanistan</text>
<text x="543" y="426.5" font-family="Liberation Serif" font-size="10.5" fill="#1a1a1a" >AG</text>
<text x="593.5" y="426.5" font-family="Liberation Serif" font-size="10.5" fill="#1a1a1a" >Antigua et Barbuda</text>
<text x="543" y="441.8" font-family="Liberation Serif" font-size="10.5" fill="#1a1a1a" >AI</text>
<text x="593.5" y="441.8" font-family="Liberation Serif" font-size="10.5" fill="#1a1a1a" >Anguilla</text>
<text x="543" y="457.0" font-family="Liberation Serif" font-size="10.5" fill="#1a1a1a" >AL</text>
<text x="593.5" y="457.0" font-family="Liberation Serif" font-size="10.5" fill="#1a1a1a" >Albanie</text>
<text x="543" y="472.3" font-family="Liberation Serif" font-size="10.5" fill="#1a1a1a" >AM</text>
<text x="593.5" y="472.3" font-family="Liberation Serif" font-size="10.5" fill="#1a1a1a" >Arménie</text>
<text x="543" y="487.6" font-family="Liberation Serif" font-size="10.5" fill="#1a1a1a" >AN</text>
<text x="593.5" y="487.6" font-family="Liberation Serif" font-size="10.5" fill="#1a1a1a" >Antilles néerlandaises</text>
<text x="543" y="502.8" font-family="Liberation Serif" font-size="10.5" fill="#1a1a1a" >AO</text>
<text x="593.5" y="502.8" font-family="Liberation Serif" font-size="10.5" fill="#1a1a1a" >Angola</text>
<text x="543" y="518.1" font-family="Liberation Serif" font-size="10.5" fill="#1a1a1a" >AR</text>
<text x="593.5" y="518.1" font-family="Liberation Serif" font-size="10.5" fill="#1a1a1a" >Argentine</text>
<text x="543" y="533.4" font-family="Liberation Serif" font-size="10.5" fill="#1a1a1a" >AT</text>
<text x="593.5" y="533.4" font-family="Liberation Serif" font-size="10.5" fill="#1a1a1a" >Autriche</text>
<text x="893.5" y="533.4" font-family="Liberation Serif" font-size="10.5" fill="#1a1a1a" >AT</text>
<text x="543" y="548.6" font-family="Liberation Serif" font-size="10.5" fill="#1a1a1a" >AU</text>
<text x="593.5" y="548.6" font-family="Liberation Serif" font-size="10.5" fill="#1a1a1a" >Australie</text>
<text x="543" y="563.9" font-family="Liberation Serif" font-size="10.5" fill="#1a1a1a" >AW</text>
<text x="593.5" y="563.9" font-family="Liberation Serif" font-size="10.5" fill="#1a1a1a" >Aruba</text>
<text x="543" y="579.2" font-family="Liberation Serif" font-size="10.5" fill="#1a1a1a" >AZ</text>
<text x="593.5" y="579.2" font-family="Liberation Serif" font-size="10.5" fill="#1a1a1a" >Azerbaïdjan</text>
<text x="543" y="594.4" font-family="Liberation Serif" font-size="10.5" fill="#1a1a1a" >B</text>
<text x="593.5" y="594.4" font-family="Liberation Serif" font-size="10.5" fill="#1a1a1a" >Belgique</text>
<text x="831" y="594.4" font-family="Liberation Serif" font-size="10.5" fill="#1a1a1a" >+32</text>
<text x="893.5" y="594.4" font-family="Liberation Serif" font-size="10.5" fill="#1a1a1a" >BE</text>
<text x="543" y="609.7" font-family="Liberation Serif" font-size="10.5" fill="#1a1a1a" >BA</text>
<text x="593.5" y="609.7" font-family="Liberation Serif" font-size="10.5" fill="#1a1a1a" >Bosnie-Herzegovine</text>
<text x="543" y="625.0" font-family="Liberation Serif" font-size="10.5" fill="#1a1a1a" >BB</text>
<text x="593.5" y="625.0" font-family="Liberation Serif" font-size="10.5" fill="#1a1a1a" >Barbade</text>
<text x="543" y="640.3" font-family="Liberation Serif" font-size="10.5" fill="#1a1a1a" >BD</text>
<text x="593.5" y="640.3" font-family="Liberation Serif" font-size="10.5" fill="#1a1a1a" >Bangladesh</text>
</g>
<rect x="487" y="640" width="707" height="21" fill="#f0f0f0" />
<line x1="487" y1="640.5" x2="1194" y2="640.5" stroke="#d4d4d4" stroke-width="1" />
<text x="489" y="655.8" font-family="Liberation Sans" font-size="9.2" fill="#3a3a3a" textLength="67.6" lengthAdjust="spacingAndGlyphs" stroke="#3a3a3a" stroke-width="0.12" >Aktuelle Seite: 1</text>
<line x1="722.5" y1="642" x2="722.5" y2="660" stroke="#d4d4d4" stroke-width="1" />
<text x="726" y="655.8" font-family="Liberation Sans" font-size="9.2" fill="#3a3a3a" textLength="70.8" lengthAdjust="spacingAndGlyphs" stroke="#3a3a3a" stroke-width="0.12" >Seiten gesamt: 5</text>
<line x1="957.5" y1="642" x2="957.5" y2="660" stroke="#d4d4d4" stroke-width="1" />
<text x="961.6" y="655.8" font-family="Liberation Sans" font-size="9.2" fill="#3a3a3a" textLength="79" lengthAdjust="spacingAndGlyphs" stroke="#3a3a3a" stroke-width="0.12" >Zoomfaktor: 100%</text>
<rect x="0" y="663" width="1200" height="21" fill="#f0f0f0" />
<line x1="0" y1="663.5" x2="1200" y2="663.5" stroke="#cfcfcf" stroke-width="1" />
<line x1="0" y1="666.5" x2="1200" y2="666.5" stroke="#e0e0e0" stroke-width="1" />
<line x1="0" y1="683.5" x2="1200" y2="683.5" stroke="#1a7fd0" stroke-width="1" />
<text x="630" y="678.6" font-family="Liberation Sans" font-size="9.2" fill="#404040" textLength="39.8" lengthAdjust="spacingAndGlyphs" stroke="#404040" stroke-width="0.12" >v3.45.0.0</text>
<line x1="676.5" y1="666" x2="676.5" y2="682" stroke="#d0d0d0" stroke-width="1" />
<text x="681.8" y="678.6" font-family="Liberation Sans" font-size="9.2" fill="#404040" textLength="112" lengthAdjust="spacingAndGlyphs" stroke="#404040" stroke-width="0.12" >SERVER-BE-SQL\INTEC2017</text>
<line x1="801.5" y1="666" x2="801.5" y2="682" stroke="#d0d0d0" stroke-width="1" />
<rect x="807.7" y="671" width="10.5" height="10" fill="#cfe6fa" stroke="#5a88c0" stroke-width="1" />
<path d="M807.2 672.5 Q807.2 668.5 812.9 668.5 Q818.7 668.5 818.7 672.5 Z" fill="#e02020" />
<rect x="809.6" y="672.8000000000001" width="1.6" height="1.6" fill="#1a3a9a" />
<rect x="809.6" y="675.2" width="1.6" height="1.6" fill="#1a3a9a" />
<rect x="809.6" y="677.6" width="1.6" height="1.6" fill="#1a3a9a" />
<rect x="812.0" y="672.8000000000001" width="1.6" height="1.6" fill="#1a3a9a" />
<rect x="812.0" y="675.2" width="1.6" height="1.6" fill="#1a3a9a" />
<rect x="812.0" y="677.6" width="1.6" height="1.6" fill="#1a3a9a" />
<rect x="814.6" y="672.8000000000001" width="1.6" height="1.6" fill="#1a3a9a" />
<rect x="814.6" y="675.2" width="1.6" height="1.6" fill="#1a3a9a" />
<rect x="814.6" y="677.6" width="1.6" height="1.6" fill="#1a3a9a" />
<text x="823" y="678.6" font-family="Liberation Sans" font-size="9.2" fill="#404040" textLength="158" lengthAdjust="spacingAndGlyphs" stroke="#404040" stroke-width="0.12" >Inteclux Software Engineering AG (002)</text>
<line x1="988.5" y1="666" x2="988.5" y2="682" stroke="#d0d0d0" stroke-width="1" />
<path d="M995.3 670 Q995.3 668.2 1000.4 668.2 Q1005.5 668.2 1005.5 670 L1005.5 678.5 Q1005.5 680.2 1000.4 680.2 Q995.3 680.2 995.3 678.5 Z" fill="#c8b8f0" />
<path d="M998 675 L1003.5 675" fill="none" stroke="#1a2a7a" stroke-width="1.6" />
<path d="M1002.5 672 L1006.5 675 L1002.5 678 Z" fill="#1a2a7a" />
<text x="1011" y="678.6" font-family="Liberation Sans" font-size="9.2" fill="#404040" textLength="45.8" lengthAdjust="spacingAndGlyphs" stroke="#404040" stroke-width="0.12" >22.06.2021</text>
<line x1="1063.5" y1="666" x2="1063.5" y2="682" stroke="#d0d0d0" stroke-width="1" />
<path d="M1070.7 681.5 C1070.7 677.5 1072.5 676.8 1076.4 676.8 C1080.3 676.8 1082.1 677.5 1082.1 681.5 Z" fill="#3a7ed0" />
<circle cx="1076.4" cy="672.8" r="3.3" fill="#f0a830"/>
<path d="M1073 672 Q1073 668.2 1076.4 668.2 Q1079.8 668.2 1079.8 672 Q1077.5 670 1073 672 Z" fill="#8a4a1a" />
<text x="1087.3" y="678.3" font-family="Liberation Sans" font-size="9.2" fill="#404040" textLength="14.6" lengthAdjust="spacingAndGlyphs" stroke="#404040" stroke-width="0.12" >ACL</text>
<line x1="1108.5" y1="666" x2="1108.5" y2="682" stroke="#d0d0d0" stroke-width="1" />
<rect x="1115.5" y="669" width="12.5" height="11" fill="#ffffff" stroke="#6a7a8a" stroke-width="1" />
<rect x="1115" y="668" width="13.5" height="3.8" fill="#e82828" />
<text x="1119.6" y="679" font-family="Liberation Sans" font-size="6.5" fill="#303030" textLength="4" lengthAdjust="spacingAndGlyphs" stroke="#303030" stroke-width="0.12" >8</text>
<text x="1132.8" y="678.6" font-family="Liberation Sans" font-size="9.2" fill="#404040" textLength="45.9" lengthAdjust="spacingAndGlyphs" stroke="#404040" stroke-width="0.12" >23.06.2021</text>
<rect x="1193" y="679" width="1.2" height="1.2" fill="#909090" />
<rect x="1190" y="682" width="1.2" height="1.2" fill="#909090" />
<rect x="1193" y="682" width="1.2" height="1.2" fill="#909090" />
<rect x="1196" y="676" width="1.2" height="1.2" fill="#909090" />
<rect x="1196" y="679" width="1.2" height="1.2" fill="#909090" />
<rect x="1196" y="682" width="1.2" height="1.2" fill="#909090" />
<defs><filter id="gl" x="-30%" y="-30%" width="160%" height="160%"><feGaussianBlur stdDeviation="1.3"/></filter></defs>
<path d="M138 130.3 L154 159.3 L144.2 159.3 L144.2 173.8 L132 173.8 L132 159.3 L122.3 159.3 Z" fill="#ffffff" stroke="#ffffff" stroke-width="9" stroke-linejoin="round" filter="url(#gl)"/>
<path d="M138 130.3 L154 159.3 L144.2 159.3 L144.2 173.8 L132 173.8 L132 159.3 L122.3 159.3 Z" fill="#ffffff" stroke="#ffffff" stroke-width="4" stroke-linejoin="round"/>
<path d="M138 130.3 L154 159.3 L144.2 159.3 L144.2 173.8 L132 173.8 L132 159.3 L122.3 159.3 Z" fill="#e60000" />
<line x1="0.5" y1="48" x2="0.5" y2="684" stroke="#1a7fd0" stroke-width="1" />
</svg>
</body></html>
